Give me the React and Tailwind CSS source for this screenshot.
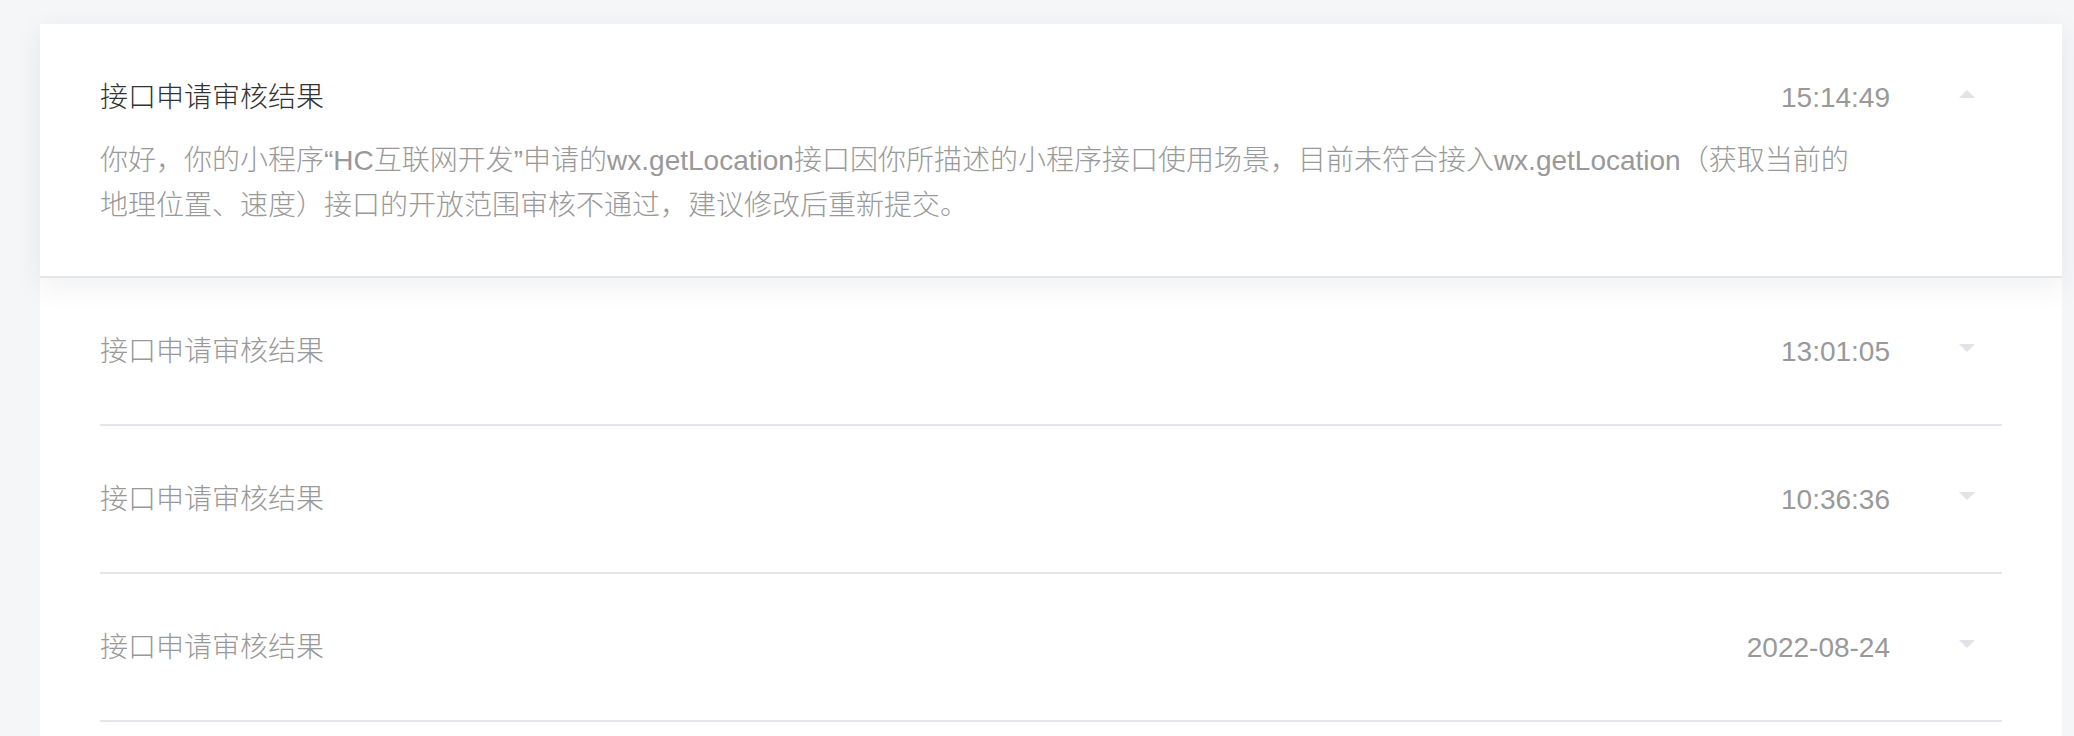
import React from 'react'

const FONT = { fontFamily: '"Liberation Sans", "Noto Sans CJK SC", sans-serif' }

const items = [
  {
    title: '接口申请审核结果',
    time: '15:14:49',
    content:
      '你好，你的小程序“HC互联网开发”申请的wx.getLocation接口因你所描述的小程序接口使用场景，目前未符合接入wx.getLocation（获取当前的地理位置、速度）接口的开放范围审核不通过，建议修改后重新提交。',
  },
  { title: '接口申请审核结果', time: '13:01:05' },
  { title: '接口申请审核结果', time: '10:36:36' },
  { title: '接口申请审核结果', time: '2022-08-24' },
]

function Caret({ up }) {
  return (
    <svg width="16" height="8" viewBox="0 0 16 8" className="-mt-2 block">
      {up ? (
        <polygon points="0,8 8,0 16,8" fill="#e2e2e8" />
      ) : (
        <polygon points="0,0 16,0 8,8" fill="#e2e2e8" />
      )}
    </svg>
  )
}

function Header({ title, time, open }) {
  return (
    <div className="flex items-center h-9">
      <span className={`flex-1 text-[28px] leading-9 font-light ${open ? 'text-[#333333]' : 'text-[#999999]'}`}>{title}</span>
      <span className="text-[28px] leading-9 text-[#999999]">{time}</span>
      <div className="w-[112px] flex items-center pl-[69px]">
        <Caret up={open} />
      </div>
    </div>
  )
}

export default function App() {
  return (
    <div className="h-screen flex flex-col overflow-hidden bg-[#f5f6f8] pt-6 pl-10 pr-3" style={FONT}>
      <div className="flex-1 bg-white">
        {items.map((item, i) =>
          item.content ? (
            <div
              key={i}
              className="relative z-10 bg-white px-[60px] pt-[56px] pb-[48px] border-b-2 border-[#e6e6ea] shadow-[0_8px_30px_rgba(20,30,60,0.07)]"
            >
              <Header title={item.title} time={item.time} open />
              <p className="mt-[22px] max-w-[1760px] text-[28px] leading-[45px] font-light text-[#999999]">{item.content}</p>
            </div>
          ) : (
            <div key={i} className="mx-[60px] pt-[56px] pb-[54px] border-b-2 border-[#e6e6ea]">
              <Header title={item.title} time={item.time} />
            </div>
          )
        )}
      </div>
    </div>
  )
}
